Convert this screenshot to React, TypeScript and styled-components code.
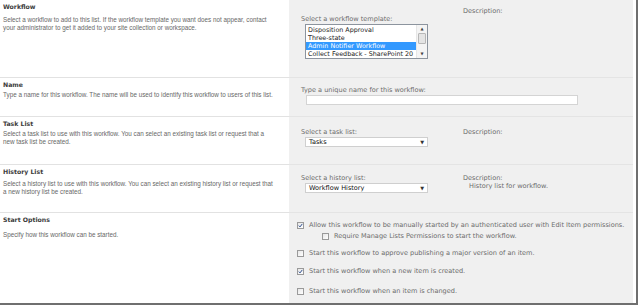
import React, { type FC } from 'react';
import styled, { createGlobalStyle } from 'styled-components';

const GlobalStyle = createGlobalStyle`
  html, body {
    margin: 0;
    padding: 0;
    background: #ffffff;
  }
`;

const Frame = styled.div`
  width: 641px;
  height: 307px;
  box-sizing: border-box;
  padding: 0 3px 2px 0;
  background: #ffffff;
`;

const Sheet = styled.div`
  height: 100%;
  box-sizing: border-box;
  border-right: 2px solid #6f6f6f;
  border-bottom: 2px solid #6f6f6f;
  padding-right: 3px;
  display: grid;
  grid-template-columns: 289px 344px;
  grid-template-rows: 77px 39px 48px 48px 1fr;
`;

const Info = styled.div<{ $first?: boolean }>`
  border-top: ${(p) => (p.$first ? 'none' : '1px solid #e2e2e2')};
  padding: 3px 13px 0 3px;
  background: #ffffff;
`;

const Heading = styled.div`
  font-family: 'DejaVu Sans', Verdana, sans-serif;
  font-weight: bold;
  font-size: 6.2px;
  line-height: 8px;
  color: #3c3c3c;
`;

const Help = styled.div<{ $gap: number }>`
  margin-top: ${(p) => p.$gap}px;
  font-family: 'Liberation Sans', Arial, sans-serif;
  font-size: 6.3px;
  line-height: 8px;
  color: #676767;
`;

const Field = styled.div<{ $first?: boolean }>`
  border-top: ${(p) => (p.$first ? 'none' : '1px solid #e4e4e4')};
  background: #f0f0f0;
  padding: 0 0 0 12px;
  display: flex;
  font-family: 'DejaVu Sans', Verdana, sans-serif;
  font-size: 6.55px;
  line-height: 8px;
  color: #6c6c6c;
`;

const Control = styled.div<{ $top: number }>`
  width: 162px;
  padding-top: ${(p) => p.$top}px;
`;

const Describe = styled.div<{ $top: number }>`
  padding-top: ${(p) => p.$top}px;
`;

const Note = styled.div`
  padding-left: 6px;
`;

const Label = styled.div`
  margin-bottom: 1px;
`;

const ListBox = styled.div`
  margin-left: 4px;
  width: 123px;
  height: 35px;
  box-sizing: border-box;
  border: 1px solid #8c949e;
  background: #ffffff;
  display: flex;
  font-size: 6.4px;
`;

const Options = styled.div`
  flex: 1;
  min-width: 0;
  padding-top: 1px;
  overflow: hidden;
  white-space: nowrap;
`;

const Option = styled.div<{ $selected?: boolean }>`
  padding-left: 2px;
  height: 8px;
  line-height: 8px;
  color: ${(p) => (p.$selected ? '#ffffff' : '#1a1a1a')};
  background: ${(p) => (p.$selected ? '#3399ff' : 'transparent')};
`;

const ScrollBar = styled.div`
  width: 10px;
  display: flex;
  flex-direction: column;
  background: #f4f4f4;
  border-left: 1px solid #e6e6e6;
`;

const Arrow = styled.div`
  height: 8px;
  display: flex;
  align-items: center;
  justify-content: center;
  font-size: 4px;
  color: #444;
`;

const Thumb = styled.div`
  height: 9px;
  margin: 0 1px;
  border: 1px solid #b7b7b7;
  border-radius: 1px;
  background: #e4e4e4;
`;

const Track = styled.div`
  flex: 1;
`;

const Select = styled.div`
  margin-left: 4px;
  width: 123px;
  height: 10px;
  box-sizing: border-box;
  border: 1px solid #cfcfcf;
  background: #ffffff;
  display: flex;
  align-items: center;
  justify-content: space-between;
  padding: 0 3px 0 3px;
  color: #111111;
`;

const Caret = styled.span`
  font-size: 5px;
  color: #333;
`;

const TextInput = styled.div`
  margin-left: 5px;
  width: 272px;
  height: 10px;
  box-sizing: border-box;
  border: 1px solid #d4d4d4;
  background: #ffffff;
`;

const NameBlock = styled.div`
  padding-top: 8px;
`;

const StartList = styled.div`
  padding-top: 8px;
  display: flex;
  flex-direction: column;
`;

const CheckRow = styled.label<{ $indent?: number; $gap?: number }>`
  display: flex;
  align-items: center;
  gap: 5px;
  height: 8px;
  margin-left: ${(p) => (p.$indent ?? 0) - 4}px;
  margin-bottom: ${(p) => p.$gap ?? 0}px;
  white-space: nowrap;
  color: #6c6c6c;
`;

const Box = styled.span`
  width: 7px;
  height: 7px;
  box-sizing: border-box;
  border: 1px solid #9a9a9a;
  background: linear-gradient(135deg, #e6e6e6, #ffffff);
  display: flex;
  align-items: center;
  justify-content: center;
`;

const Check: FC = () => (
  <svg width="5" height="5" viewBox="0 0 5 5">
    <path d="M0.8 2.6 L2 3.9 L4.3 0.9" fill="none" stroke="#2f4f8f" strokeWidth="1" />
  </svg>
);

const CheckBox: FC<{ on?: boolean }> = ({ on }) => <Box>{on && <Check />}</Box>;

const App: FC = () => (
  <Frame>
    <GlobalStyle />
    <Sheet>
      <Info $first>
        <Heading>Workflow</Heading>
        <Help $gap={5}>
          Select a workflow to add to this list. If the workflow template you want does not appear, contact
          your administrator to get it added to your site collection or workspace.
        </Help>
      </Info>
      <Field $first>
        <Control $top={15}>
          <Label>Select a workflow template:</Label>
          <ListBox>
            <Options>
              <Option>Disposition Approval</Option>
              <Option>Three-state</Option>
              <Option $selected>Admin Notifier Workflow</Option>
              <Option>Collect Feedback - SharePoint 20</Option>
            </Options>
            <ScrollBar>
              <Arrow>▲</Arrow>
              <Thumb />
              <Track />
              <Arrow>▼</Arrow>
            </ScrollBar>
          </ListBox>
        </Control>
        <Describe $top={7}>Description:</Describe>
      </Field>

      <Info>
        <Heading>Name</Heading>
        <Help $gap={2}>
          Type a name for this workflow. The name will be used to identify this workflow to users of this list.
        </Help>
      </Info>
      <Field>
        <NameBlock>
          <Label>Type a unique name for this workflow:</Label>
          <TextInput />
        </NameBlock>
      </Field>

      <Info>
        <Heading>Task List</Heading>
        <Help $gap={2}>
          Select a task list to use with this workflow. You can select an existing task list or request that a
          new task list be created.
        </Help>
      </Info>
      <Field>
        <Control $top={11}>
          <Label>Select a task list:</Label>
          <Select>
            Tasks<Caret>▼</Caret>
          </Select>
        </Control>
        <Describe $top={11}>Description:</Describe>
      </Field>

      <Info>
        <Heading>History List</Heading>
        <Help $gap={4}>
          Select a history list to use with this workflow. You can select an existing history list or request that
          a new history list be created.
        </Help>
      </Info>
      <Field>
        <Control $top={9}>
          <Label>Select a history list:</Label>
          <Select>
            Workflow History<Caret>▼</Caret>
          </Select>
        </Control>
        <Describe $top={9}>
          Description:
          <Note>History list for workflow.</Note>
        </Describe>
      </Field>

      <Info>
        <Heading>Start Options</Heading>
        <Help $gap={7}>Specify how this workflow can be started.</Help>
      </Info>
      <Field>
        <StartList>
          <CheckRow $gap={3}>
            <CheckBox on />
            Allow this workflow to be manually started by an authenticated user with Edit Item permissions.
          </CheckRow>
          <CheckRow $indent={25} $gap={9}>
            <CheckBox />
            Require Manage Lists Permissions to start the workflow.
          </CheckRow>
          <CheckRow $gap={10}>
            <CheckBox />
            Start this workflow to approve publishing a major version of an item.
          </CheckRow>
          <CheckRow $gap={12}>
            <CheckBox on />
            Start this workflow when a new item is created.
          </CheckRow>
          <CheckRow>
            <CheckBox />
            Start this workflow when an item is changed.
          </CheckRow>
        </StartList>
      </Field>
    </Sheet>
  </Frame>
);

export default App;
